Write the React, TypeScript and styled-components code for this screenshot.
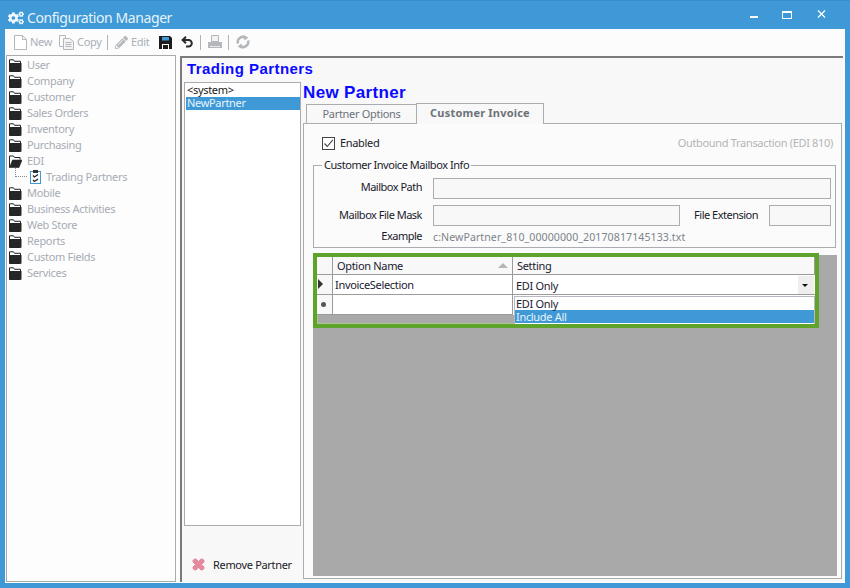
import React from "react";
import styled, { createGlobalStyle } from "styled-components";
import { FaCogs, FaPencilAlt } from "react-icons/fa";

const UI = `"Noto Sans", sans-serif`;

const Global = createGlobalStyle`
  html, body { margin: 0; padding: 0; background: #3e99d6; }
  #root { width: 850px; height: 588px; overflow: hidden; }
  * { box-sizing: border-box; }
`;

const Window = styled.div`
  position: relative; width: 850px; height: 588px; background: #3e99d6;
  font: 11px ${UI}; letter-spacing: -0.32px; color: #1a1a2a; overflow: hidden;
  border-top: 1px solid #3a8fc9;
`;
const TitleBar = styled.div`
  position: absolute; left: 8px; top: 8px; height: 17px; display: flex; align-items: center; gap: 3px;
  font: 14px ${UI}; letter-spacing: -0.42px; color: #e8f3fb; white-space: nowrap;
`;
const WinButtons = styled.svg`position: absolute; left: 740px; top: 6px;`;
const Client = styled.div`
  position: absolute; left: 5px; top: 28px; width: 840px; height: 554px; background: #fcfcfc;
`;
const Toolbar = styled.div`
  position: absolute; left: 9px; top: 0; height: 26px; display: flex; align-items: center;
  color: #a9b0b8;
`;
const ToolItem = styled.div<{ $w: number }>`
  width: ${p => p.$w}px; display: flex; align-items: center; gap: 3px; flex: none;
  svg { flex: none; }
`;
const ToolLabel = styled.span`position: relative; top: -1px;`;
const ToolSep = styled.div`
  width: 9px; height: 15px; flex: none; position: relative;
  &::before { content: ""; position: absolute; left: 1px; top: 0; width: 1px; height: 15px; background: #b4b4b4; }
`;
const TreePanel = styled.div`
  position: absolute; left: 1px; top: 26px; width: 170px; height: 527px;
  background: #fdfdfd; border: 1px solid #ababab; padding-top: 1px;
`;
const TreeRow = styled.div<{ $child?: boolean }>`
  height: 16px; display: flex; align-items: center; padding-left: ${p => (p.$child ? 23 : 2)}px; gap: ${p => (p.$child ? 4 : 5)}px;
  color: #a7acb4; position: relative; white-space: nowrap;
`;
const TreeLabel = styled.span`position: relative; top: -1px;`;
const TreeDots = styled.div`
  position: absolute; left: 8px; top: -1px; width: 12px; height: 9px;
  border-left: 1px dotted #888; border-bottom: 1px dotted #888;
`;
const Main = styled.div`
  position: absolute; left: 175px; top: 27px; width: 663px; height: 526px;
  background: #f8f8f8; border-top: 2px solid #7a7a7a; border-left: 2px solid #7a7a7a; 
`;
const Heading = styled.div`
  position: absolute; left: 5px; top: 2px; font: bold 15px "Liberation Sans", sans-serif;
  color: #0a0aff; letter-spacing: 0.45px; white-space: nowrap;
`;
const SubHeading = styled(Heading)`
  left: 121px; top: 25px; font-size: 17px; letter-spacing: 0.35px;
`;
const PartnerList = styled.div`
  position: absolute; left: 2px; top: 24px; width: 117px; height: 444px;
  background: #fff; border: 1px solid #ababab; padding: 1px 0 1px 1px;
`;
const PartnerItem = styled.div<{ $on?: boolean }>`
  height: 13px; line-height: 11px; padding-left: 1px;
  background: ${p => (p.$on ? "#3e99d6" : "transparent")};
  color: ${p => (p.$on ? "#eaf4fb" : "#1a1a1a")};
`;
const RemoveButton = styled.div`
  position: absolute; left: 10px; top: 498px; display: flex; align-items: center; gap: 8px;
  height: 16px; white-space: nowrap;
`;
const Tab = styled.div<{ $on?: boolean; $l: number; $w: number }>`
  position: absolute; left: ${p => p.$l}px; width: ${p => p.$w}px;
  top: ${p => (p.$on ? 45 : 46)}px; height: ${p => (p.$on ? 21 : 20)}px;
  border: 1px solid #a9adb1; border-bottom: ${p => (p.$on ? "none" : "1px solid #a9adb1")};
  background: #f8f8f8; z-index: ${p => (p.$on ? 2 : 1)};
  text-align: center; line-height: 18px;
  letter-spacing: ${p => (p.$on ? "0.2px" : "-0.3px")};
  font-weight: ${p => (p.$on ? 700 : 400)}; color: #6c7278;
`;
const TabPanel = styled.div`
  position: absolute; left: 121px; top: 65px; width: 539px; height: 456px;
  border: 1px solid #a9adb1; background: #fbfbfb;
`;
const CheckRow = styled.div`
  position: absolute; left: 18px; top: 12px; display: flex; align-items: center; gap: 5px; height: 14px;
`;
const CheckLabel = styled.span`position: relative; top: -1px;`;
const CheckBox = styled.div`
  width: 13px; height: 13px; border: 1px solid #444; background: #fff;
  display: flex; align-items: center; justify-content: center;
`;
const Outbound = styled.div`
  position: absolute; right: 8px; top: 11px; color: #b5b5b5;
`;
const Group = styled.div`
  position: absolute; left: 9px; top: 41px; width: 523px; height: 83px; border: 1px solid #a9adb1;
`;
const GroupTitle = styled.div`
  position: absolute; left: 8px; top: -8px; padding: 0 2px; background: #fbfbfb; line-height: 14px;
  white-space: nowrap; letter-spacing: -0.45px;
`;
const FieldLabel = styled.div<{ $top: number; $right?: number }>`
  position: absolute; top: ${p => p.$top}px; right: ${p => p.$right ?? 413}px; line-height: 14px;
  white-space: nowrap; letter-spacing: -0.5px;
`;
const Input = styled.div<{ $l: number; $t: number; $w: number }>`
  position: absolute; left: ${p => p.$l}px; top: ${p => p.$t}px; width: ${p => p.$w}px; height: 21px;
  border: 1px solid #a9adb1; background: #f8f8f8;
`;
const ExampleValue = styled.div`
  position: absolute; left: 119px; top: 64px; line-height: 14px; color: #7d848a; font-size: 10.6px;
  letter-spacing: 0.07px; white-space: nowrap;
`;
const GridArea = styled.div`
  position: absolute; left: 9px; top: 131px; width: 524px; height: 321px; background: #a9a9a9;
`;
const Highlight = styled.div`
  position: absolute; left: 0; top: -2px; width: 506px; height: 75px;
  border: 4px solid #5ea42a; box-shadow: inset 0 0 0 1px #a9c98f;
`;
const Grid = styled.div`
  position: absolute; left: 0; top: 0; width: 498px; display: grid;
  grid-template-columns: 16px 180px 302px; grid-template-rows: 18px 20px 20px; background: #fff;
`;
const HeadCell = styled.div`
  background: #f8f8f8; border-right: 1px solid #9b9b9b; border-bottom: 1px solid #9b9b9b;
  padding-left: 4px; line-height: 18px; position: relative; color: #1a2030;
  &:last-child { border-right: none; }
`;
const SortArrow = styled.div`
  position: absolute; right: 4px; top: 6px; width: 0; height: 0;
  border-left: 5px solid transparent; border-right: 5px solid transparent; border-bottom: 5px solid #b5b5b5;
`;
const Cell = styled.div`
  background: #fff; border-right: 1px solid #9b9b9b; border-bottom: 1px solid #9b9b9b;
  padding-left: 2px; line-height: 19px; position: relative; color: #1a2030;
`;
const SettingCell = styled(Cell)`border-right: none; padding-left: 3px; line-height: 21px;`;
const RowHead = styled.div`
  background: #f8f8f8; border-right: 1px solid #9b9b9b; border-bottom: 1px solid #9b9b9b; position: relative;
`;
const RowPointer = styled.div`
  position: absolute; left: 1px; top: 4px; width: 0; height: 0;
  border-top: 5px solid transparent; border-bottom: 5px solid transparent; border-left: 5px solid #333;
`;
const RowStar = styled.div`
  position: absolute; left: 4px; top: 7px; width: 5px; height: 5px; border-radius: 50%; background: #555;
`;
const DropButton = styled.div`
  position: absolute; right: 1px; top: 1px; width: 16px; height: 18px; background: #eeeeee;
  &::after { content: ""; position: absolute; left: 4px; top: 8px; width: 0; height: 0;
    border-left: 3px solid transparent; border-right: 3px solid transparent; border-top: 3px solid #111; }
`;
const DropList = styled.div`
  position: absolute; left: 197px; top: 39px; width: 301px; height: 28px; background: #fff;
  border: 1px solid #b9b9c4; border-bottom: none; z-index: 3;
`;
const DropItem = styled.div<{ $on?: boolean }>`
  height: 13px; line-height: 13px; padding-left: 1px;
  background: ${p => (p.$on ? "#3e99d6" : "#fff")};
  color: ${p => (p.$on ? "#e8f3fb" : "#1a2030")};
`;

const NewIcon = () => (
  <svg width="13" height="15" viewBox="0 0 13 15"><path d="M.5.5h8l4 4v10H.5z M8.5.5v4h4" fill="#fff" stroke="#b4b8bc" /></svg>
);
const CopyIcon = () => (
  <svg width="15" height="15" viewBox="0 0 15 15" fill="none" stroke="#b4b8bc">
    <path d="M.5.5h6v11h-6z" /><path d="M4.5 3.5h6l4 3v8h-10z" fill="#f4f4f4" /><path d="M6.5 7.5h6M6.5 9.5h6M6.5 11.5h6" />
  </svg>
);
const SaveIcon = () => (
  <svg width="13" height="13" viewBox="0 0 13 13">
    <path d="M0 0h11l2 2v11H0z" fill="#1c1c1c" />
    <rect x="3" y="1" width="7" height="3.5" fill="#3e99d6" />
    <rect x="3" y="8" width="7" height="5" fill="#fff" />
    <rect x="4" y="9" width="5" height="4" fill="#1c1c1c" />
  </svg>
);
const UndoIcon = () => (
  <svg width="12" height="12" viewBox="0 0 12 12" fill="none" stroke="#2a2a2a" strokeWidth="2">
    <path d="M1.5 4h6a3.2 3.2 0 0 1 0 6.6H5" /><path d="M5 .8 1.6 4 5 7.2" />
  </svg>
);
const PrintIcon = () => (
  <svg width="14" height="15" viewBox="0 0 14 15">
    <path d="M3.5.5h7v6h-7z" fill="#f2f2f2" stroke="#b4b8bc" />
    <path d="M0 7h14v6H0z" fill="#b4b8bc" />
    <rect x="2" y="11" width="10" height="1" fill="#e8e8e8" />
  </svg>
);
const RefreshIcon = () => (
  <svg width="14" height="14" viewBox="0 0 14 14" fill="none" stroke="#b4b8bc" strokeWidth="2.6">
    <path d="M2 8.5A5 5 0 0 1 9.5 2.8" />
    <path d="M12 5.5A5 5 0 0 1 4.5 11.2" />
    <path d="M7.5 0l5 2.5-4 3z" fill="#b4b8bc" stroke="none" />
    <path d="M6.5 14l-5-2.5 4-3z" fill="#b4b8bc" stroke="none" />
  </svg>
);
const Folder = ({ open }: { open?: boolean }) => (
  <svg width="13" height="13" viewBox="0 0 13 13">
    {open ? (
      <>
        <path d="M.5 12.5V1h4l1 1.5H11v2" fill="#fff" stroke="#222" />
        <path d="M.5 12.5 3.5 5h9.5l-3 7.5z" fill="#262626" stroke="#262626" strokeWidth=".6" />
      </>
    ) : (
      <>
        <path d="M.5 12.5V.8h4l1 1.5h6v10.2z" fill="#fff" stroke="#222" />
        <path d="M.5 4h12v8.5H.5z" fill="#262626" />
      </>
    )}
  </svg>
);
const ClipIcon = () => (
  <svg width="12" height="14" viewBox="0 0 12 14">
    <rect x=".5" y="1.5" width="10" height="12" fill="#fff" stroke="#3e99d6" />
    <rect x="3" y="0" width="5" height="3" fill="#333" />
    <path d="M3 5.5l1.5 1.5L8 4.5M3 10l1.5 1.5L8 9" fill="none" stroke="#222" strokeWidth="1.3" />
  </svg>
);
const RemoveIcon = () => (
  <svg width="13" height="13" viewBox="0 0 13 13">
    <path d="M1 2.5 2.5 1h1.5l2.5 2.5L9 1h1.5L12 2.5V4L9.5 6.5 12 9v1.5L10.5 12H9L6.5 9.5 4 12H2.5L1 10.5V9l2.5-2.5L1 4z" fill="#e58a9e" stroke="#e58a9e" />
  </svg>
);
const CheckMark = () => (
  <svg width="11" height="11" viewBox="0 0 11 11"><path d="M1.5 5.5 4.3 8.5 9.8 1.8" fill="none" stroke="#444" strokeWidth="1.1" /></svg>
);

const tree = ["User", "Company", "Customer", "Sales Orders", "Inventory", "Purchasing"];
const tree2 = ["Mobile", "Business Activities", "Web Store", "Reports", "Custom Fields", "Services"];

export default function App() {
  return (
    <Window>
      <Global />
      <TitleBar>
        <FaCogs size={16} color="#f2f8fc" />
        <span>Configuration Manager</span>
      </TitleBar>
      <WinButtons width="90" height="14" viewBox="0 0 90 14">
        <rect x="10" y="9" width="8" height="2" fill="#fff" />
        <rect x="42.5" y="4.5" width="9" height="7" fill="none" stroke="#fff" />
        <rect x="42" y="4" width="10" height="2" fill="#fff" />
        <path d="M78 3.5l7 7M85 3.5l-7 7" stroke="#fff" strokeWidth="1.2" />
      </WinButtons>
      <Client>
        <Toolbar>
          <ToolItem $w={45}><NewIcon /><ToolLabel>New</ToolLabel></ToolItem>
          <ToolItem $w={47}><CopyIcon /><ToolLabel>Copy</ToolLabel></ToolItem>
          <ToolSep />
          <ToolItem $w={44}><FaPencilAlt size={13} color="#b4b8bc" /><ToolLabel>Edit</ToolLabel></ToolItem>
          <ToolItem $w={22}><SaveIcon /></ToolItem>
          <ToolItem $w={18}><UndoIcon /></ToolItem>
          <ToolSep />
          <ToolItem $w={19}><PrintIcon /></ToolItem>
          <ToolSep />
          <ToolItem $w={14}><RefreshIcon /></ToolItem>
        </Toolbar>
        <TreePanel>
          {tree.map(t => <TreeRow key={t}><Folder /><TreeLabel>{t}</TreeLabel></TreeRow>)}
          <TreeRow><Folder open /><TreeLabel>EDI</TreeLabel></TreeRow>
          <TreeRow $child><TreeDots /><ClipIcon /><TreeLabel>Trading Partners</TreeLabel></TreeRow>
          {tree2.map(t => <TreeRow key={t}><Folder /><TreeLabel>{t}</TreeLabel></TreeRow>)}
        </TreePanel>
        <Main>
          <Heading>Trading Partners</Heading>
          <SubHeading>New Partner</SubHeading>
          <PartnerList>
            <PartnerItem>&lt;system&gt;</PartnerItem>
            <PartnerItem $on>NewPartner</PartnerItem>
          </PartnerList>
          <RemoveButton><RemoveIcon /><span>Remove Partner</span></RemoveButton>
          <Tab $l={124} $w={111}>Partner Options</Tab>
          <Tab $on $l={234} $w={128}>Customer Invoice</Tab>
          <TabPanel>
            <CheckRow><CheckBox><CheckMark /></CheckBox><CheckLabel>Enabled</CheckLabel></CheckRow>
            <Outbound>Outbound Transaction (EDI 810)</Outbound>
            <Group>
              <GroupTitle>Customer Invoice Mailbox Info</GroupTitle>
              <FieldLabel $top={14}>Mailbox Path</FieldLabel>
              <Input $l={119} $t={12} $w={398} />
              <FieldLabel $top={42}>Mailbox File Mask</FieldLabel>
              <Input $l={119} $t={39} $w={247} />
              <FieldLabel $top={42} $right={77}>File Extension</FieldLabel>
              <Input $l={455} $t={39} $w={62} />
              <FieldLabel $top={63}>Example</FieldLabel>
              <ExampleValue>c:NewPartner_810_00000000_20170817145133.txt</ExampleValue>
            </Group>
            <GridArea>
              <Highlight>
                <Grid>
                  <HeadCell />
                  <HeadCell>Option Name<SortArrow /></HeadCell>
                  <HeadCell>Setting</HeadCell>
                  <RowHead><RowPointer /></RowHead>
                  <Cell>InvoiceSelection</Cell>
                  <SettingCell>EDI Only<DropButton /></SettingCell>
                  <RowHead><RowStar /></RowHead>
                  <Cell />
                </Grid>
                <DropList>
                  <DropItem>EDI Only</DropItem>
                  <DropItem $on>Include All</DropItem>
                </DropList>
              </Highlight>
            </GridArea>
          </TabPanel>
        </Main>
      </Client>
    </Window>
  );
}
